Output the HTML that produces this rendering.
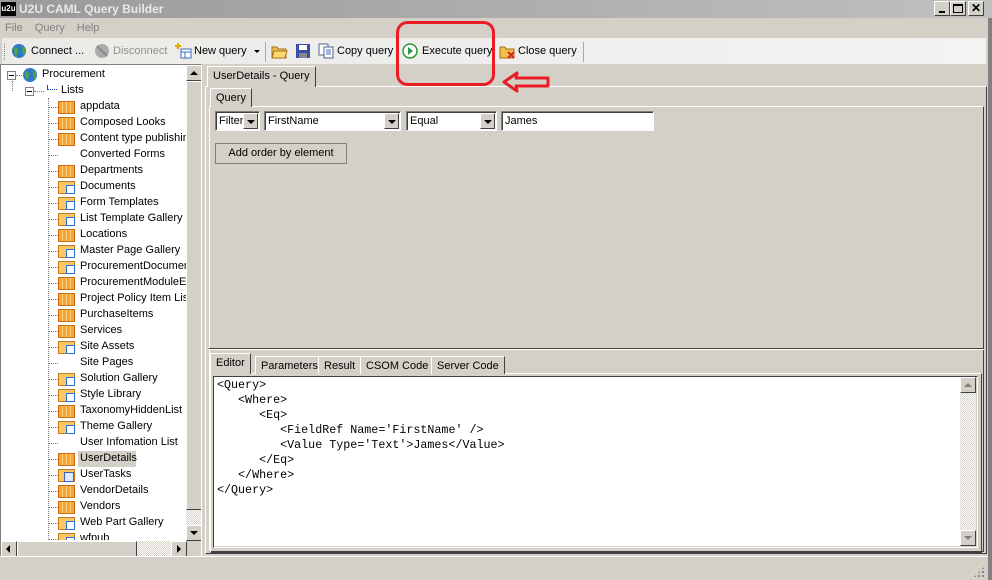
<!DOCTYPE html>
<html><head><style>
*{box-sizing:border-box;margin:0;padding:0}
body{width:992px;height:580px;overflow:hidden;background:#d4d0c8;font-family:"Liberation Sans",sans-serif;font-size:11px;color:#000;position:relative}
.a{position:absolute}
.raised{border:1px solid;border-color:#fff #404040 #404040 #fff;background:#d4d0c8}
.sunk{border:1px solid;border-color:#808080 #fff #fff #808080}
.tab{position:absolute;border:1px solid;border-color:#fff #404040 transparent #fff;border-bottom:none;padding:3px 5px 0 5px;height:19px;background:#d4d0c8;white-space:nowrap}
.ti{position:absolute;left:0;height:16px;width:186px}
.ti .d{position:absolute;left:48px;top:8px;width:10px;border-top:1px dotted #808080}
.ti .t{position:absolute;left:80px;top:1px;white-space:nowrap}
.ic{position:absolute;left:58px;top:2px;width:17px;height:13px}
.L{background:repeating-linear-gradient(90deg,#f7a23a 0 3px,#ffd779 3px 4px);border:1px solid #d26b10}
.F{background:#f9c866;border:1px solid #c97a1a}
.F::after{content:"";position:absolute;left:7px;top:3px;width:7px;height:7px;background:#fff;border:1px solid #2b6cd8}
.T{background:#f9c866;border:1px solid #c97a1a}
.T::after{content:"";position:absolute;left:5px;top:2px;width:8px;height:8px;background:#dfe8ff;border:1px solid #4060c0}
.cb{position:absolute;height:20px;background:#fff;border:1px solid;border-color:#808080 #fff #fff #808080;box-shadow:inset 1px 1px 0 #404040;padding:3px 3px;white-space:nowrap}
.cb .btn{position:absolute;right:1px;top:1px;width:15px;height:16px;border:1px solid;border-color:#fff #404040 #404040 #fff;background:#d4d0c8}
.cb .btn::after{content:"";position:absolute;left:3px;top:6px;border:4px solid transparent;border-top:4px solid #000;border-bottom:none}
.sb{position:absolute;width:16px;height:16px;border:1px solid;border-color:#fff #404040 #404040 #fff;background:#d4d0c8}
.chk{background-color:#e8e6e2;background-image:repeating-conic-gradient(#d4d0c8 0 25%,#fff 0 50%);background-size:2px 2px}
pre{font-family:"Liberation Mono",monospace;font-size:11.7px;line-height:15px}
</style></head><body>
<!-- title -->
<div class="a" style="left:0;top:0;width:992px;height:18px;background:linear-gradient(90deg,#9a9a9a,#c0c0c0)"></div>
<div class="a" style="left:1px;top:2px;width:15px;height:14px;background:#000;color:#fff;font-size:8px;line-height:14px;text-align:center;font-weight:bold">u2u</div>
<div class="a" style="left:19px;top:2px;color:#e8e8e8;font-weight:bold;font-size:12px">U2U CAML Query Builder</div>
<div class="a raised" style="left:934px;top:1px;width:16px;height:15px"><div class="a" style="left:4px;top:9px;width:6px;height:2px;background:#000"></div></div>
<div class="a raised" style="left:950px;top:1px;width:16px;height:15px"><div class="a" style="left:2px;top:2px;width:10px;height:9px;border:1px solid #000;border-top-width:2px"></div></div>
<div class="a raised" style="left:968px;top:1px;width:16px;height:15px;font-size:12px;font-weight:bold;text-align:center;line-height:13px">✕</div>
<div class="a" style="left:988px;top:18px;width:4px;height:562px;background:#808080"></div>
<!-- menu -->
<div class="a" style="left:5px;top:22px;color:#808080;font-size:11px;word-spacing:9px">File Query Help</div>
<!-- toolbar -->
<div class="a" style="left:2px;top:38px;width:984px;height:26px;background:linear-gradient(90deg,#ebeae7,#f4f3f2)"></div>
<div class="a" style="left:4px;top:43px;width:2px;height:17px;border-left:1px dotted #888"></div>
<svg class="a" style="left:11px;top:43px" width="16" height="16"><circle cx="8" cy="8" r="7" fill="#2f78c8"/><path d="M4 4 Q8 6 7 9 Q5 11 6 14 Q3 11 3 7Z M9 2 Q12 5 11 8 Q13 10 12 13 Q15 10 14 6Z" fill="#4caa3c"/></svg>
<div class="a" style="left:31px;top:45px">Connect ...</div>
<svg class="a" style="left:94px;top:43px" width="16" height="16"><circle cx="8" cy="8" r="7" fill="#aaa"/><path d="M3 3 L13 13" stroke="#888" stroke-width="2"/></svg>
<div class="a" style="left:113px;top:45px;color:#909090">Disconnect</div>
<svg class="a" style="left:175px;top:42px" width="18" height="18"><path d="M3 1v6M0 4h6" stroke="#e0a800" stroke-width="2"/><rect x="6" y="7" width="10" height="9" fill="#fff" stroke="#3a6cc0"/><path d="M6 10h10M10 10v6" stroke="#3a6cc0"/></svg>
<div class="a" style="left:194px;top:45px">New query</div>
<div class="a" style="left:254px;top:50px;border:3px solid transparent;border-top:3px solid #000"></div>
<div class="a" style="left:265px;top:42px;width:1px;height:20px;background:#aaa"></div>
<svg class="a" style="left:271px;top:43px" width="17" height="16"><path d="M1 4h5l1 2h8v9H1z" fill="#f2c04a" stroke="#a07020"/><path d="M3 8h13l-2 7H1z" fill="#fbd870" stroke="#a07020"/></svg>
<svg class="a" style="left:295px;top:43px" width="16" height="16"><rect x="1" y="1" width="14" height="14" fill="#3a4ea8"/><rect x="4" y="2" width="8" height="5" fill="#fff"/><rect x="4" y="10" width="8" height="5" fill="#888"/></svg>
<svg class="a" style="left:318px;top:43px" width="17" height="16"><rect x="1" y="1" width="9" height="11" fill="#fff" stroke="#506090"/><rect x="6" y="4" width="9" height="11" fill="#fff" stroke="#506090"/><path d="M8 7h5M8 9h5M8 11h5" stroke="#4070c0"/></svg>
<div class="a" style="left:337px;top:45px">Copy query</div>
<div class="a" style="left:396px;top:42px;width:1px;height:20px;background:#aaa"></div>
<svg class="a" style="left:402px;top:43px" width="16" height="16"><circle cx="8" cy="8" r="7" fill="#fff" stroke="#2a9a3a" stroke-width="1.5"/><path d="M6 4l5 4-5 4z" fill="#2a9a3a"/></svg>
<div class="a" style="left:422px;top:45px">Execute query</div>
<svg class="a" style="left:499px;top:43px" width="17" height="17"><path d="M1 4h5l1 2h8v9H1z" fill="#f2c04a" stroke="#a07020"/><path d="M9 9l6 6M15 9l-6 6" stroke="#e02020" stroke-width="2"/></svg>
<div class="a" style="left:518px;top:45px">Close query</div>
<div class="a" style="left:583px;top:42px;width:1px;height:20px;background:#aaa"></div>
<!-- tree -->
<div class="a sunk" style="left:0;top:64px;width:202px;height:493px;background:#fff;overflow:hidden">
<div class="a" style="left:-1px;top:1px;width:186px;height:474px;overflow:hidden">
<div class="a" style="left:7px;top:5px;width:9px;height:9px;border:1px solid #808080;background:#fff"><div class="a" style="left:1px;top:3px;width:5px;height:1px;background:#000"></div></div>
<div class="a" style="left:16px;top:9px;width:6px;border-top:1px dotted #808080"></div>
<svg class="a" style="left:22px;top:1px" width="16" height="16"><circle cx="8" cy="8" r="7" fill="#2f78c8"/><path d="M4 4 Q8 6 7 9 Q5 11 6 14 Q3 11 3 7Z M9 2 Q12 5 11 8 Q13 10 12 13 Q15 10 14 6Z" fill="#4caa3c"/></svg>
<div class="a" style="left:42px;top:2px">Procurement</div>
<div class="a" style="left:12px;top:15px;height:10px;border-left:1px dotted #808080"></div>
<div class="a" style="left:25px;top:21px;width:9px;height:9px;border:1px solid #808080;background:#fff"><div class="a" style="left:1px;top:3px;width:5px;height:1px;background:#000"></div></div>
<div class="a" style="left:34px;top:25px;width:10px;border-top:1px dotted #808080"></div>
<div class="a" style="left:47px;top:19px;width:10px;height:5px;border-left:1px solid #2040c0;border-bottom:1px dotted #2040c0"></div>
<div class="a" style="left:61px;top:18px">Lists</div>
<div class="a" style="left:48px;top:32px;height:460px;border-left:1px dotted #808080"></div>
<div class="a" style="left:0;top:33px;width:186px">
<div class="ti" style="top:0"><div class="d"></div><div class="ic L"></div><div class="t">appdata</div></div>
<div class="ti" style="top:16px"><div class="d"></div><div class="ic L"></div><div class="t">Composed Looks</div></div>
<div class="ti" style="top:32px"><div class="d"></div><div class="ic L"></div><div class="t">Content type publishing</div></div>
<div class="ti" style="top:48px"><div class="d"></div><div class="t">Converted Forms</div></div>
<div class="ti" style="top:64px"><div class="d"></div><div class="ic L"></div><div class="t">Departments</div></div>
<div class="ti" style="top:80px"><div class="d"></div><div class="ic F"></div><div class="t">Documents</div></div>
<div class="ti" style="top:96px"><div class="d"></div><div class="ic F"></div><div class="t">Form Templates</div></div>
<div class="ti" style="top:112px"><div class="d"></div><div class="ic F"></div><div class="t">List Template Gallery</div></div>
<div class="ti" style="top:128px"><div class="d"></div><div class="ic L"></div><div class="t">Locations</div></div>
<div class="ti" style="top:144px"><div class="d"></div><div class="ic F"></div><div class="t">Master Page Gallery</div></div>
<div class="ti" style="top:160px"><div class="d"></div><div class="ic F"></div><div class="t">ProcurementDocuments</div></div>
<div class="ti" style="top:176px"><div class="d"></div><div class="ic L"></div><div class="t">ProcurementModuleExt</div></div>
<div class="ti" style="top:192px"><div class="d"></div><div class="ic L"></div><div class="t">Project Policy Item List</div></div>
<div class="ti" style="top:208px"><div class="d"></div><div class="ic L"></div><div class="t">PurchaseItems</div></div>
<div class="ti" style="top:224px"><div class="d"></div><div class="ic L"></div><div class="t">Services</div></div>
<div class="ti" style="top:240px"><div class="d"></div><div class="ic F"></div><div class="t">Site Assets</div></div>
<div class="ti" style="top:256px"><div class="d"></div><div class="t">Site Pages</div></div>
<div class="ti" style="top:272px"><div class="d"></div><div class="ic F"></div><div class="t">Solution Gallery</div></div>
<div class="ti" style="top:288px"><div class="d"></div><div class="ic F"></div><div class="t">Style Library</div></div>
<div class="ti" style="top:304px"><div class="d"></div><div class="ic L"></div><div class="t">TaxonomyHiddenList</div></div>
<div class="ti" style="top:320px"><div class="d"></div><div class="ic F"></div><div class="t">Theme Gallery</div></div>
<div class="ti" style="top:336px"><div class="d"></div><div class="t">User Infomation List</div></div>
<div class="ti" style="top:352px"><div class="d"></div><div class="ic L"></div><div class="a" style="left:78px;top:0;width:58px;height:16px;background:#d4d0c8"></div><div class="t">UserDetails</div></div>
<div class="ti" style="top:368px"><div class="d"></div><div class="ic T"></div><div class="t">UserTasks</div></div>
<div class="ti" style="top:384px"><div class="d"></div><div class="ic L"></div><div class="t">VendorDetails</div></div>
<div class="ti" style="top:400px"><div class="d"></div><div class="ic L"></div><div class="t">Vendors</div></div>
<div class="ti" style="top:416px"><div class="d"></div><div class="ic F"></div><div class="t">Web Part Gallery</div></div>
<div class="ti" style="top:432px"><div class="d"></div><div class="ic F"></div><div class="t">wfpub</div></div>
</div></div>
<!-- vscroll -->
<div class="a" style="left:185px;top:0;width:16px;height:476px;background:#d4d0c8"></div>
<div class="sb" style="left:185px;top:0"><div class="a" style="left:3px;top:5px;border:4px solid transparent;border-bottom:4px solid #000;border-top:none"></div></div>
<div class="sb" style="left:185px;top:16px;height:429px"></div>
<div class="a chk" style="left:185px;top:445px;width:16px;height:15px"></div>
<div class="sb" style="left:185px;top:460px"><div class="a" style="left:3px;top:5px;border:4px solid transparent;border-top:4px solid #000;border-bottom:none"></div></div>
<!-- hscroll -->
<div class="a chk" style="left:0;top:476px;width:186px;height:16px"></div>
<div class="sb" style="left:0;top:476px"><div class="a" style="left:4px;top:3px;border:4px solid transparent;border-right:4px solid #000;border-left:none"></div></div>
<div class="sb" style="left:16px;top:476px;width:120px"></div>
<div class="sb" style="left:170px;top:476px"><div class="a" style="left:5px;top:3px;border:4px solid transparent;border-left:4px solid #000;border-right:none"></div></div>
<div class="a" style="left:186px;top:476px;width:16px;height:16px;background:#d4d0c8"></div>
</div>
<!-- right pane -->
<div class="a" style="left:205px;top:86px;width:782px;height:468px;border:1px solid;border-color:#fff #404040 #404040 #fff"></div>
<div class="tab" style="left:207px;top:66px;height:21px;border-right-color:#404040">UserDetails - Query</div>
<div class="a" style="left:209px;top:106px;width:775px;height:446px;border:1px solid;border-color:#fff #404040 #404040 #fff"></div>
<div class="tab" style="left:210px;top:88px;height:19px">Query</div>
<div class="cb" style="left:215px;top:111px;width:45px">Filter<div class="btn"></div></div>
<div class="cb" style="left:264px;top:111px;width:137px">FirstName<div class="btn"></div></div>
<div class="cb" style="left:406px;top:111px;width:91px">Equal<div class="btn"></div></div>
<div class="cb" style="left:501px;top:111px;width:153px">James</div>
<div class="a" style="left:215px;top:143px;width:132px;height:21px;border:1px solid #808080;background:#d4d0c8;text-align:center;padding-top:3px">Add order by element</div>
<div class="a" style="left:209px;top:348px;width:775px;height:2px;border-top:1px solid #404040;border-bottom:1px solid #fff"></div>
<!-- editor tabs -->
<div class="a" style="left:210px;top:373px;width:772px;height:180px;border:1px solid;border-color:#fff #404040 #404040 #fff"></div>
<div class="tab" style="left:210px;top:353px;height:21px">Editor</div>
<div class="tab" style="left:255px;top:356px;height:18px;border-right-color:#404040">Parameters</div>
<div class="tab" style="left:318px;top:356px;height:18px;border-right-color:#404040">Result</div>
<div class="tab" style="left:360px;top:356px;height:18px;border-right-color:#404040">CSOM Code</div>
<div class="tab" style="left:431px;top:356px;height:18px;border-right-color:#404040">Server Code</div>
<div class="a" style="left:213px;top:376px;width:765px;height:172px;background:#fff;border:1px solid;border-color:#404040 #fff #fff #404040;box-shadow:inset -1px -1px 0 #d4d0c8"></div>
<pre class="a" style="left:217px;top:378px">&lt;Query&gt;
   &lt;Where&gt;
      &lt;Eq&gt;
         &lt;FieldRef Name='FirstName' /&gt;
         &lt;Value Type='Text'&gt;James&lt;/Value&gt;
      &lt;/Eq&gt;
   &lt;/Where&gt;
&lt;/Query&gt;</pre>
<div class="a chk" style="left:960px;top:377px;width:16px;height:169px"></div>
<div class="sb" style="left:960px;top:377px"><div class="a" style="left:3px;top:5px;border:4px solid transparent;border-bottom:4px solid #808080;border-top:none"></div></div>
<div class="sb" style="left:960px;top:530px"><div class="a" style="left:3px;top:5px;border:4px solid transparent;border-top:4px solid #808080;border-bottom:none"></div></div>
<!-- status -->
<div class="a" style="left:0;top:556px;width:988px;height:1px;background:#fff"></div>
<div class="a" style="left:973px;top:566px;width:12px;height:12px;background:radial-gradient(circle,#808080 1px,transparent 1.2px) 0 0/4px 4px;clip-path:polygon(100% 0,100% 100%,0 100%)"></div>
<!-- annotations -->
<svg class="a" style="left:390px;top:18px" width="170" height="75"><rect x="7.5" y="4.5" width="96" height="62" rx="10" fill="none" stroke="#ec1c24" stroke-width="3"/><path d="M114 64 L127 55 L126 60 L158 60 L158 68 L126 68 L127 73 Z" fill="none" stroke="#ec1c24" stroke-width="3" stroke-linejoin="round"/></svg>
</body></html>
